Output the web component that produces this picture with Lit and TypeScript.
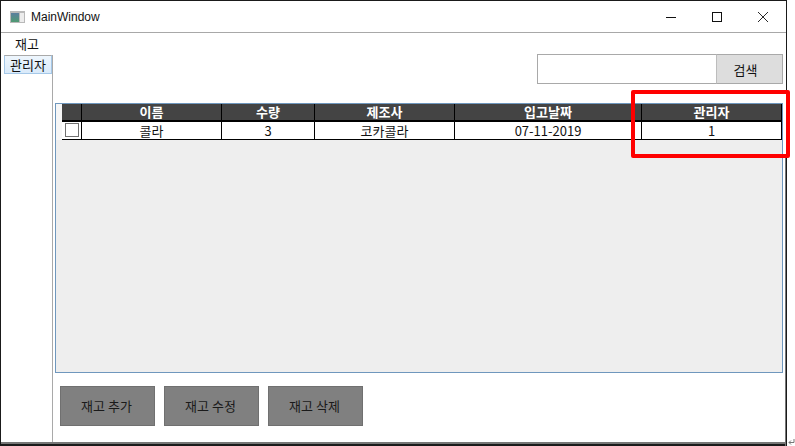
import { LitElement, html, css } from "lit";
import { customElement } from "lit/decorators.js";

const COLS = [
  { label: "이름", value: "콜라", w: 140 },
  { label: "수량", value: "3", w: 93 },
  { label: "제조사", value: "코카콜라", w: 140 },
  { label: "입고날짜", value: "07-11-2019", w: 187 },
  { label: "관리자", value: "1", w: 140 },
];

@customElement("app-root")
export class AppRoot extends LitElement {
  static styles = css`
    :host {
      display: block;
      position: relative;
      width: 795px;
      height: 446px;
      overflow: hidden;
      background: #fff;
      font-family: "Noto Sans CJK KR", "Liberation Sans", sans-serif;
      font-size: 13px;
      color: #111;
    }
    .window {
      box-sizing: border-box;
      width: 787px;
      height: 444px;
      border: 1px solid #1a1a1a;
      border-bottom: 0;
      display: flex;
      flex-direction: column;
      background: #fff;
    }
    .title {
      height: 31px;
      flex: none;
      display: flex;
      align-items: center;
      border-bottom: 1px solid #a8a8a8;
    }
    .title svg.app { margin: 0 5px 0 9px; }
    .title .name {
      font-family: "Liberation Sans", sans-serif;
      font-size: 12px;
      flex: 1;
    }
    .ctl {
      width: 46px;
      height: 31px;
      display: flex;
      align-items: center;
      justify-content: center;
    }
    .menu {
      height: 22px;
      flex: none;
      display: flex;
      align-items: center;
      padding-left: 14px;
      line-height: 1;
      padding-bottom: 1px;
      box-sizing: border-box;
    }
    .body {
      flex: 1;
      display: flex;
      min-height: 0;
      border-bottom: 2px solid #777;
    }
    .side {
      box-sizing: border-box;
      width: 52px;
      flex: none;
      border-right: 1px solid #a9a9a9;
      padding-left: 3px;
    }
    .tab {
      box-sizing: border-box;
      height: 19px;
      width: 48px;
      background: linear-gradient(#eef6fd, #d9eafa);
      border: 1px solid #a5c8e8;
      border-top-color: #a9a9a9;
      display: flex;
      align-items: center;
      justify-content: center;
      line-height: 1;
      padding-bottom: 1px;
    }
    .main {
      flex: 1;
      display: flex;
      flex-direction: column;
      align-items: flex-start;
      padding-left: 2px;
    }
    .search {
      display: flex;
      align-self: flex-end;
      margin: -1px 3px 0 0;
      height: 30px;
    }
    .search .input {
      box-sizing: border-box;
      width: 179px;
      border: 1px solid #a9a9a9;
      border-right: 0;
      background: #fff;
    }
    .search .btn {
      box-sizing: border-box;
      width: 67px;
      background: #dddddd;
      border: 1px solid #a9a9a9;
      border-left-color: #bdbdbd;
      display: flex;
      align-items: center;
      justify-content: center;
      padding-right: 8px;
    }
    .grid {
      box-sizing: border-box;
      width: 728px;
      height: 270px;
      margin-top: 19px;
      background: #eeeeee;
      border: 1px solid #6f97bd;
    }
    .row {
      display: flex;
      height: 18px;
    }
    .rowhead {
      width: 6px;
      flex: none;
      background: #f6f6f6;
    }
    .cells {
      flex: none;
      display: flex;
      box-sizing: border-box;
    }
    .row.head .cells {
      background: #444444;
      color: #fff;
      font-weight: 700;
      border-bottom: 2px solid #000;
    }
    .row.data .cells {
      background: #fff;
      border-bottom: 1px solid #000;
    }
    .cell {
      box-sizing: border-box;
      border-right: 1px solid #000;
      display: flex;
      align-items: center;
      justify-content: center;
      line-height: 1;
      padding-bottom: 1px;
    }
    .check { width: 20px; flex: none; }
    .box {
      box-sizing: border-box;
      width: 14px;
      height: 14px;
      border: 1px solid #707070;
      background: #fff;
      margin-left: 1px;
    }
    .actions {
      display: flex;
      gap: 9px;
      margin: 13px 0 0 5px;
    }
    .action {
      box-sizing: border-box;
      width: 95px;
      height: 40px;
      background: #808080;
      border: 1px solid #707070;
      display: flex;
      align-items: center;
      justify-content: center;
      color: #1a1a1a;
      padding-right: 2px;
      padding-bottom: 1px;
    }
    .mark {
      position: absolute;
      box-sizing: border-box;
      left: 631px;
      top: 90px;
      width: 159px;
      height: 68px;
      border: 4px solid #ff0000;
      border-radius: 2px;
    }
    .strip {
      position: absolute;
      left: 0;
      top: 444px;
      width: 787px;
      height: 2px;
      background: #1a1a1a;
    }
    .rightedge {
      position: absolute;
      left: 785px;
      top: 158px;
      width: 2px;
      height: 288px;
      background: linear-gradient(90deg, #777 50%, #1a1a1a 50%);
    }
    .enter {
      position: absolute;
      left: 788px;
      top: 439px;
    }
  `;

  render() {
    return html`
      <div class="window">
        <div class="title">
          <svg class="app" width="16" height="14" viewBox="0 0 16 14">
            <defs>
              <linearGradient id="pane" x1="0" y1="0" x2="0" y2="1">
                <stop offset="0" stop-color="#5b7f9f" />
                <stop offset="1" stop-color="#4f9a72" />
              </linearGradient>
            </defs>
            <rect x="0" y="1" width="15" height="12" fill="#b9b9b9" />
            <rect x="1" y="3" width="8" height="9" fill="url(#pane)" />
            <rect x="10" y="3" width="4" height="9" fill="#ececec" />
          </svg>
          <span class="name">MainWindow</span>
          <div class="ctl">
            <svg width="10" height="10" viewBox="0 0 10 10">
              <path d="M0 5.5H10" stroke="#111" fill="none" />
            </svg>
          </div>
          <div class="ctl">
            <svg width="10" height="10" viewBox="0 0 10 10">
              <rect x="0.5" y="0.5" width="9" height="9" stroke="#111" fill="none" />
            </svg>
          </div>
          <div class="ctl">
            <svg width="10" height="10" viewBox="0 0 10 10">
              <path d="M0 0L10 10M10 0L0 10" stroke="#111" fill="none" stroke-width="0.9" />
            </svg>
          </div>
        </div>
        <div class="menu">재고</div>
        <div class="body">
          <div class="side"><div class="tab">관리자</div></div>
          <div class="main">
            <div class="search">
              <div class="input"></div>
              <div class="btn">검색</div>
            </div>
            <div class="grid">
              <div class="row head">
                <div class="rowhead"></div>
                <div class="cells">
                  <div class="cell check"></div>
                  ${COLS.map((c) => html`<div class="cell" style="width:${c.w}px">${c.label}</div>`)}
                </div>
              </div>
              <div class="row data">
                <div class="rowhead"></div>
                <div class="cells">
                  <div class="cell check"><div class="box"></div></div>
                  ${COLS.map((c) => html`<div class="cell" style="width:${c.w}px">${c.value}</div>`)}
                </div>
              </div>
            </div>
            <div class="actions">
              <div class="action">재고 추가</div>
              <div class="action">재고 수정</div>
              <div class="action">재고 삭제</div>
            </div>
          </div>
        </div>
      </div>
      <div class="strip"></div>
      <div class="rightedge"></div>
      <svg class="enter" width="7" height="7" viewBox="0 0 7 7">
        <path d="M6 0V3.5H1M3 1.5L1 3.5L3 5.5" stroke="#777" fill="none" />
      </svg>
      <div class="mark"></div>
    `;
  }
}
